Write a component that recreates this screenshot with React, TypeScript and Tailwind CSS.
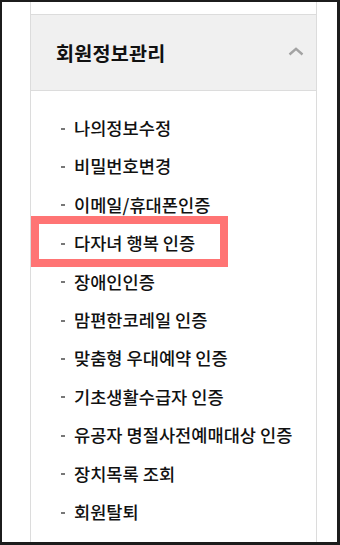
import React from "react";

const items = [
  "나의정보수정",
  "비밀번호변경",
  "이메일/휴대폰인증",
  "다자녀 행복 인증",
  "장애인인증",
  "맘편한코레일 인증",
  "맞춤형 우대예약 인증",
  "기초생활수급자 인증",
  "유공자 명절사전예매대상 인증",
  "장치목록 조회",
  "회원탈퇴",
];

export default function App() {
  return (
    <div
      className="w-[340px] h-[545px] bg-[#1c1c1c] pl-[2px] pt-[2px] pr-[3px] pb-[3px] overflow-hidden"
      style={{ fontFamily: '"Noto Sans CJK KR", "Noto Sans", sans-serif' }}
    >
      <div className="relative w-full h-full bg-white overflow-hidden">
        <div className="ml-[28px] w-[287px] h-full border-x border-[#dcdcdc] flex flex-col">
          <div className="h-[12px]" />
          <div className="h-[77px] bg-[#f0f0f0] border-y border-[#dcdcdc] flex items-center justify-between pl-[25px] pr-[12px]">
            <span className="text-[19.6px] font-bold text-[#111] tracking-[0.2px]">회원정보관리</span>
            <svg width="16" height="9" viewBox="0 0 16 9" className="mt-[-2px]">
              <path d="M1.5 7.5 L8 1.8 L14.5 7.5" fill="none" stroke="#a3a3a3" strokeWidth="2.4" />
            </svg>
          </div>
          <div className="pt-[18px] flex flex-col">
            {items.map((t) => (
              <div key={t} className="h-[38.4px] flex items-center pl-[30px]">
                <span className="w-[4px] h-[2px] bg-[#777] mr-[9px] mt-[1px]" />
                <span className="text-[17.6px] font-medium text-[#111]">{t}</span>
              </div>
            ))}
          </div>
        </div>
        <div className="absolute left-[29px] top-[214px] w-[197px] h-[51px] border-[8px] border-[#ff7474]" />
      </div>
    </div>
  );
}
